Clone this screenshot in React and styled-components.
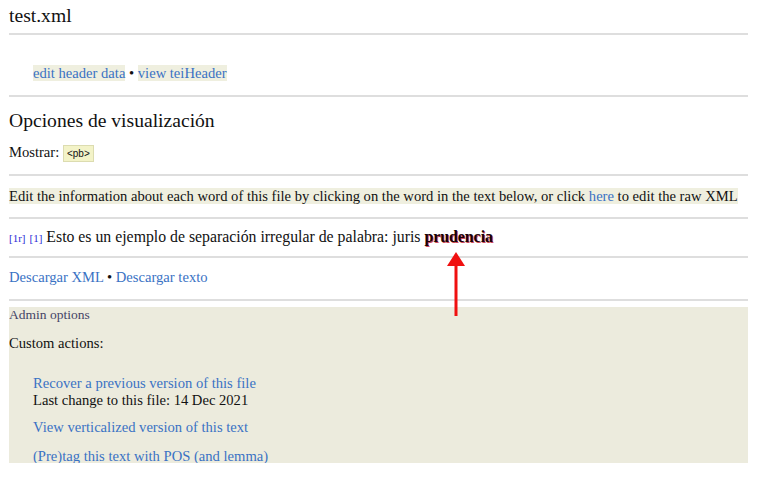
import React from "react";
import styled, { createGlobalStyle } from "styled-components";

const GlobalStyle = createGlobalStyle`
  body {
    margin: 0;
    background: #fff;
    font-family: "Liberation Serif", "Times New Roman", serif;
    color: #111;
  }
`;

const Page = styled.div`
  position: relative;
  padding: 4px 33px 0 9px;
  font-size: 14.6px;
  line-height: 18px;
`;

const Title = styled.h1`
  margin: 0;
  font-size: 19.6px;
  font-weight: normal;
  line-height: 24px;
  padding-bottom: 5px;
`;

const Rule = styled.hr`
  border: 0;
  border-top: 2px solid #dedede;
  margin: 0;
`;

const Section = styled.div`
  padding: ${({ pad }) => pad || "10px 0"};
  font-size: ${({ size }) => size || "inherit"};
`;

const Indent = styled.div`
  padding-left: 24px;
`;

const Link = styled.a`
  color: #3a72c4;
  text-decoration: none;
  background: ${({ hl }) => (hl ? "#efefdf" : "transparent")};
`;

const Heading = styled.h2`
  margin: 0 0 10px;
  font-size: 19.6px;
  font-weight: normal;
  line-height: 24px;
`;

const Tag = styled.span`
  font-family: "Liberation Sans", Arial, sans-serif;
  font-size: 10px;
  line-height: 12px;
  background: #f3f3c8;
  border: 1px solid #dcdcb0;
  padding: 2px 3px;
`;

const Note = styled.span`
  background: #efefdf;
`;

const PageRef = styled.a`
  color: #2b2bd6;
  font-size: 11px;
  line-height: 12px;
  text-decoration: none;
  margin-right: 4px;
`;

const Word = styled.span`
  font-weight: bold;
  color: #1a0006;
  text-shadow: 1px 1px 0 rgba(190, 10, 30, 0.75);
`;

const Admin = styled.div`
  background: #ecebdd;
  height: 156px;
  overflow: hidden;
  box-sizing: border-box;
`;

const AdminTitle = styled.div`
  font-size: 13.5px;
  color: #444466;
  line-height: 16px;
`;

const Action = styled.div`
  margin-top: ${({ gap }) => gap || 0}px;
  line-height: 17px;
`;

const Arrow = styled.svg`
  position: absolute;
  left: 447px;
  top: 252px;
`;

export default function App() {
  return (
    <>
      <GlobalStyle />
      <Page>
        <Title>test.xml</Title>
        <Rule />
        <Section pad="29px 0 13px">
          <Indent>
            <Link hl href="#">edit header data</Link> •{" "}
            <Link hl href="#">view teiHeader</Link>
          </Indent>
        </Section>
        <Rule />
        <Section pad="12px 0 13px">
          <Heading>Opciones de visualización</Heading>
          Mostrar: <Tag>&lt;pb&gt;</Tag>
        </Section>
        <Rule />
        <Section pad="11px 0 12px">
          <Note>
            Edit the information about each word of this file by clicking on the
            word in the text below, or click <Link href="#">here</Link> to edit
            the raw XML
          </Note>
        </Section>
        <Rule />
        <Section pad="9px 0 10px" size="15.8px">
          <PageRef href="#">[1r]</PageRef>
          <PageRef href="#">[1]</PageRef>
          Esto es un ejemplo de separación irregular de palabra: juris{" "}
          <Word>prudencia</Word>
        </Section>
        <Rule />
        <Section pad="10px 0 13px">
          <Link href="#">Descargar XML</Link> • <Link href="#">Descargar texto</Link>
        </Section>
        <Rule />
        <Section pad="6px 0 0">
          <Admin>
            <AdminTitle>Admin options</AdminTitle>
            <Action gap={12}>Custom actions:</Action>
            <Indent>
              <Action gap={23}>
                <Link href="#">Recover a previous version of this file</Link>
              </Action>
              <Action>Last change to this file: 14 Dec 2021</Action>
              <Action gap={10}>
                <Link href="#">View verticalized version of this text</Link>
              </Action>
              <Action gap={12}>
                <Link href="#">(Pre)tag this text with POS (and lemma)</Link>
              </Action>
            </Indent>
          </Admin>
        </Section>
        <Arrow width="18" height="66" viewBox="0 0 18 66">
          <polygon points="9,0 18,14 0,14" fill="#f01010" />
          <rect x="7.5" y="12" width="3" height="52" fill="#f01010" />
        </Arrow>
      </Page>
    </>
  );
}
